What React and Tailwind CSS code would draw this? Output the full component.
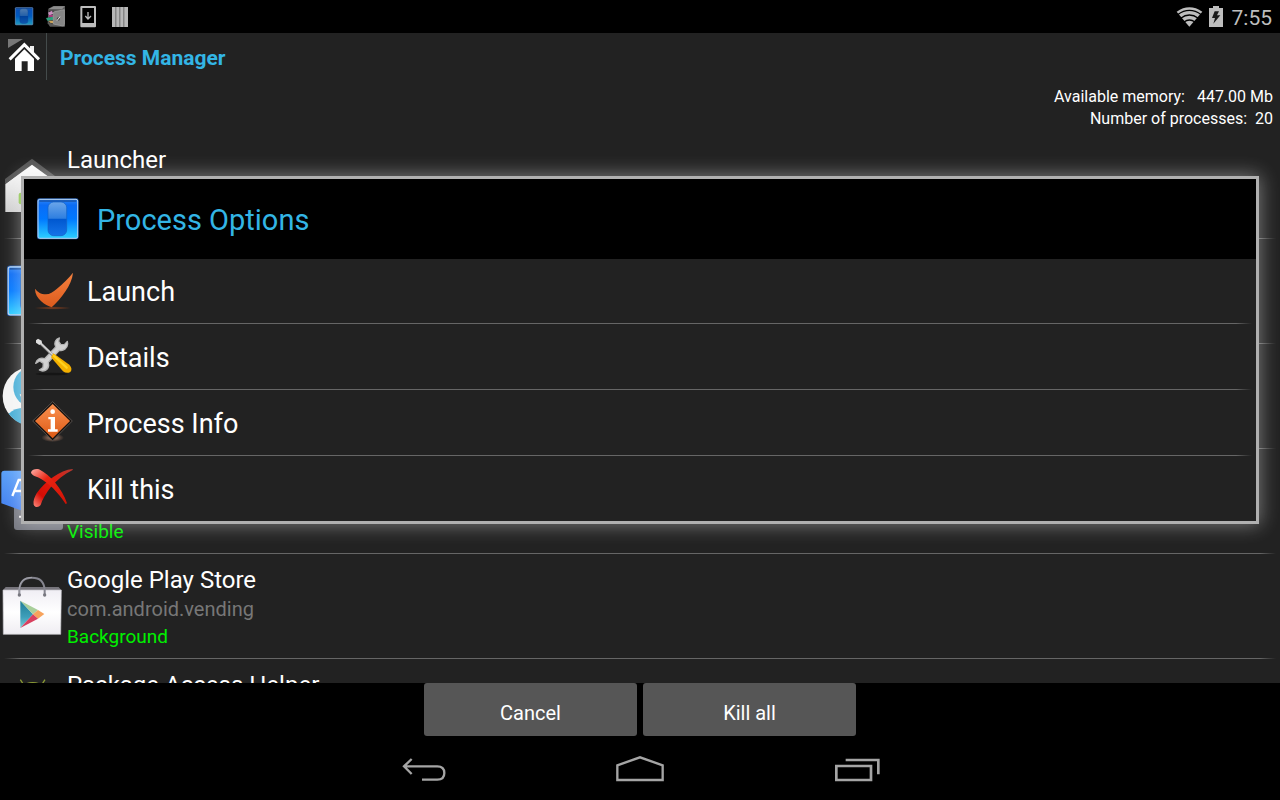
import React from 'react';

const BlueSwitchIcon = ({ id, className, viewBox = '0 0 126 126' }) => (
    <svg className={className} viewBox={viewBox} aria-hidden="true">
        <defs>
            <linearGradient id={`${id}-bg`} x1="0" y1="0" x2="0" y2="1">
                <stop offset="0" stopColor="#2f86f5" />
                <stop offset="0.15" stopColor="#0a6cf5" />
                <stop offset="0.5" stopColor="#0078ff" />
                <stop offset="1" stopColor="#2ccfff" />
            </linearGradient>
            <linearGradient id={`${id}-pill`} x1="0" y1="0" x2="0" y2="1">
                <stop offset="0" stopColor="#6ba6ea" />
                <stop offset="0.48" stopColor="#2f7fe0" />
                <stop offset="0.52" stopColor="#0058d0" />
                <stop offset="1" stopColor="#1573e8" />
            </linearGradient>
        </defs>
        <rect x="0" y="1" width="125" height="123" rx="7" fill="#1c4f9c" />
        <rect x="3" y="4" width="119" height="117" rx="5" fill={`url(#${id}-bg)`} stroke="#b9d3ee" strokeWidth="3" />
        <path d="M7 9H118" stroke="#103f86" strokeWidth="3" />
        <rect x="33" y="12" width="56" height="101" rx="17" fill={`url(#${id}-pill)`} stroke="#1360c4" strokeWidth="2" />
    </svg>
);

const LauncherIcon = () => (
    <svg className="size-16" viewBox="0 42 192 192" aria-hidden="true">
        <defs>
            <linearGradient id="house" x1="0" y1="0" x2="0" y2="1">
                <stop offset="0" stopColor="#ffffff" />
                <stop offset="1" stopColor="#cfcfcf" />
            </linearGradient>
        </defs>
        <path d="M16 132L96 70L176 132V216H16Z" fill="url(#house)" />
        <path d="M15 133V117L96 56L177 117V133L96 74Z" fill="#555" />
        <rect x="56" y="158" width="14" height="35" rx="6" fill="#8bc34a" />
    </svg>
);

const PeopleIcon = () => (
    <svg className="size-16" viewBox="0 -63 192 192" aria-hidden="true">
        <circle cx="96" cy="33" r="88" fill="#f4f4f4" />
        <ellipse cx="98" cy="6" rx="58" ry="60" fill="#45add6" />
        <path d="M26 86Q44 68 72 68V119Q44 110 26 86Z" fill="#45add6" />
        <path d="M59 26L72 34V42Q60 36 59 26Z" fill="#eee" />
    </svg>
);

const KeyboardIcon = () => (
    <svg className="size-16" viewBox="0 252 192 192" aria-hidden="true">
        <defs>
            <linearGradient id="kb" x1="0" y1="0" x2="0" y2="1">
                <stop offset="0" stopColor="#5aa0f8" />
                <stop offset="1" stopColor="#3d78ee" />
            </linearGradient>
        </defs>
        <rect x="42" y="330" width="147" height="105" rx="9" fill="#74767f" />
        <path d="M57 392H66V398H57ZM75 410H152V417H75Z" fill="#eee" />
        <path d="M13 257H130V400L4 355V266Q4 257 13 257Z" fill="url(#kb)" />
        <path d="M37 333L56 285H66V333M43 318H66" fill="none" stroke="#fff" strokeWidth="7" />
    </svg>
);

const PlayStoreIcon = () => (
    <svg className="size-16" viewBox="0 102 192 192" aria-hidden="true">
        <defs>
            <linearGradient id="bag" x1="0" y1="0" x2="0" y2="1">
                <stop offset="0" stopColor="#f0eef4" />
                <stop offset="0.5" stopColor="#ffffff" />
                <stop offset="1" stopColor="#efedf2" />
            </linearGradient>
            <linearGradient id="play" x1="0" y1="0" x2="0" y2="1">
                <stop offset="0" stopColor="#1f7d96" />
                <stop offset="0.6" stopColor="#3e9fba" />
                <stop offset="1" stopColor="#7ccdd6" />
            </linearGradient>
        </defs>
        <path d="M17 141H176L184 151H9Z" fill="#77757c" />
        <path d="M9 150H184L182 283H10Z" fill="url(#bag)" stroke="#c4c2c8" strokeWidth="2" />
        <path d="M58 165V150Q60 113 96 113Q132 113 134 150V165" fill="none" stroke="#85858f" strokeWidth="6" />
        <path d="M57 164V148Q60 112 96 112" fill="none" stroke="#b5b5bd" strokeWidth="2" />
        <circle cx="58" cy="165" r="5" fill="#77777f" />
        <circle cx="134" cy="165" r="5" fill="#77777f" />
        <path d="M61 182V264L99 223Z" fill="url(#play)" />
        <path d="M61 182L114 210L99 223Z" fill="#a9cf9b" />
        <path d="M114 210L133 222L114 236L99 223Z" fill="#f7a35c" />
        <path d="M61 264L99 223L114 236Z" fill="#d8405f" />
    </svg>
);

const AndroidIcon = () => (
    <svg className="size-16" viewBox="0 417 192 192" aria-hidden="true">
        <path d="M61 419L72 436M135 419L124 436" stroke="#8a9a34" strokeWidth="4" />
        <path d="M58 470Q58 426 98 426Q138 426 138 470Z" fill="#8a9a34" />
    </svg>
);

const CheckIcon = () => (
    <svg className="size-12" viewBox="87 36 144 144" aria-hidden="true">
        <defs>
            <linearGradient id="check" x1="0" y1="0" x2="0" y2="1">
                <stop offset="0" stopColor="#f58240" />
                <stop offset="1" stopColor="#dc5a1c" />
            </linearGradient>
            <radialGradient id="check-glow">
                <stop offset="0" stopColor="#8a3f1c" />
                <stop offset="1" stopColor="#8a3f1c" stopOpacity="0" />
            </radialGradient>
        </defs>
        <ellipse cx="158" cy="159" rx="56" ry="5" fill="url(#check-glow)" />
        <path d="M105 101C112 110 122 118 138 118C149 118 160 111 170 102C190 85 205 70 219 53C216 90 182 132 155 157C136 150 105 132 105 101Z" fill="url(#check)" />
    </svg>
);

const ToolsIcon = () => (
    <svg className="size-12" viewBox="87 234 144 144" aria-hidden="true">
        <ellipse cx="155" cy="357" rx="48" ry="4" fill="#151515" />
        <path
            d="M178 249C166 252 161 265 167 276L134 311C122 307 110 312 107 325L119 318L130 325L129 338L118 345C130 352 145 345 146 331L145 322L178 286C190 289 202 281 203 267L202 259L193 269L182 268L176 259Z"
            fill="#d2d2d2"
            stroke="#b5b5b5"
            strokeWidth="4"
            strokeLinejoin="round"
        />
        <path d="M118 262L160 302" stroke="#8e8e8e" strokeWidth="8" />
        <path d="M118 261L160 301" stroke="#d9d9d9" strokeWidth="4" />
        <path d="M108 256L114 251L125 257L126 265L118 270L108 263Z" fill="#dedede" />
        <path d="M160 295L208 329Q219 342 211 351Q200 357 189 349L153 307Z" fill="#f4b000" />
        <path d="M162 303L200 338" stroke="#ffd21f" strokeWidth="7" strokeLinecap="round" />
    </svg>
);

const InfoIcon = () => (
    <svg className="size-12" viewBox="87 42 144 144" aria-hidden="true">
        <defs>
            <linearGradient id="info" x1="0" y1="0" x2="0" y2="1">
                <stop offset="0" stopColor="#fb9150" />
                <stop offset="1" stopColor="#dc5a16" />
            </linearGradient>
            <radialGradient id="info-glow">
                <stop offset="0.3" stopColor="#8a6654" />
                <stop offset="1" stopColor="#8a6654" stopOpacity="0" />
            </radialGradient>
        </defs>
        <ellipse cx="158" cy="158" rx="34" ry="13" fill="url(#info-glow)" />
        <path d="M158 50L217 108L158 167L98 108Z" fill="#17120f" stroke="#55504d" strokeWidth="3" strokeLinejoin="round" />
        <path d="M158 57L210 108L158 160L105 108Z" fill="url(#info)" />
        <circle cx="158" cy="80" r="7" fill="#fff" />
        <path d="M145 96H165V133H173V140H144V133H152V103H145Z" fill="#fff" />
    </svg>
);

const KillIcon = () => (
    <svg className="size-12" viewBox="87 240 144 144" aria-hidden="true">
        <defs>
            <linearGradient id="killA" x1="0" y1="0" x2="1" y2="1">
                <stop offset="0" stopColor="#ffb0a8" />
                <stop offset="0.35" stopColor="#ea2412" />
                <stop offset="1" stopColor="#d01205" />
            </linearGradient>
            <linearGradient id="killB" x1="1" y1="0" x2="0" y2="1">
                <stop offset="0" stopColor="#b33a32" />
                <stop offset="0.4" stopColor="#e51a0c" />
                <stop offset="0.75" stopColor="#d40d05" />
                <stop offset="1" stopColor="#ff8a7c" />
            </linearGradient>
        </defs>
        <path d="M218 252C180 255 136 288 110 325C103 337 99 348 101 359C105 368 116 368 122 360C132 328 165 280 218 255Z" fill="url(#killB)" />
        <path d="M93 262C96 253 108 251 117 253C150 270 186 310 201 355L197 357C175 322 145 293 118 279C106 274 95 272 93 262Z" fill="url(#killA)" />
    </svg>
);

const SafeIcon = () => (
    <svg className="size-6" viewBox="132 15 72 72" aria-hidden="true">
        <path d="M145 26L160 18H195V72L188 80H150L143 70Z" fill="#5a5a5a" />
        <path d="M146 27L162 19H194L186 28Z" fill="#8c8c8c" />
        <path d="M147 32H163V72L147 68Z" fill="#2c2c2c" />
        <path d="M144 38L156 32L160 42L148 46Z" fill="#c98fc0" />
        <path d="M146 45H160V52H146Z" fill="#a53a7c" />
        <path d="M138 54L160 50V60L142 62Z" fill="#2aa07c" />
        <path d="M146 62H160V70L150 68Z" fill="#cda45c" />
        <path d="M160 36L193 29V79L160 72Z" fill="#868686" stroke="#a8a8a8" strokeWidth="2" />
        <circle cx="175" cy="57" r="5" fill="#4a4a4a" />
        <path d="M171 62L180 50" stroke="#ddd" strokeWidth="3" />
    </svg>
);

const DownloadIcon = () => (
    <svg className="size-6" viewBox="228 15 72 72" aria-hidden="true">
        <path fillRule="evenodd" d="M244 18H285Q288 18 288 21V79Q288 82 285 82H244Q241 82 241 79V21Q241 18 244 18ZM247 24V69H282V24Z" fill="#bdbdbd" />
        <path d="M264 36V54M256 48L264 57L273 48" fill="none" stroke="#bdbdbd" strokeWidth="4" />
    </svg>
);

const BarsIcon = () => (
    <svg className="size-6" viewBox="324 15 72 72" aria-hidden="true">
        <path d="M336 21H384V81H336Z" fill="#6e6e6e" />
        <path d="M336 21H346V81H336ZM349 21H358V81H349ZM361 21H370V81H361ZM373 21H384V81H373Z" fill="#b8b8b8" />
    </svg>
);

const WifiIcon = () => (
    <svg className="h-6 w-7" viewBox="408 12 84 72" aria-hidden="true">
        <path d="M410 32Q448 6 487 32L448 77Z" fill="#bebebe" />
        <path d="M413 41Q448 15 484 41M422 52Q448 32 475 52M432 63Q448 51 465 63" fill="none" stroke="#000" strokeWidth="4" />
    </svg>
);

const BatteryIcon = () => (
    <svg className="h-6 w-4" viewBox="504 12 48 72" aria-hidden="true">
        <path d="M519 15H537V21H549V78H507V21H519Z" fill="#bebebe" />
        <path d="M524 31H537L531 43H541L520 68L525 51H516Z" fill="#1a1a1a" />
    </svg>
);

const processes = [
    { icon: <LauncherIcon />, name: 'Launcher' },
    { icon: <BlueSwitchIcon id="proc" className="size-16" viewBox="-17 -15 156 156" /> },
    { icon: <PeopleIcon /> },
    { icon: <KeyboardIcon />, status: 'Visible' },
    { icon: <PlayStoreIcon />, name: 'Google Play Store', pkg: 'com.android.vending', status: 'Background' },
    { icon: <AndroidIcon />, name: 'Package Access Helper' },
];

const options = [
    { icon: <CheckIcon />, label: 'Launch' },
    { icon: <ToolsIcon />, label: 'Details' },
    { icon: <InfoIcon />, label: 'Process Info' },
    { icon: <KillIcon />, label: 'Kill this' },
];

const Divider = () => (
    <div className="mx-1 flex h-px">
        <div className="w-4 bg-linear-to-r from-transparent to-[#666]"></div>
        <div className="flex-1 bg-[#666]"></div>
        <div className="w-4 bg-linear-to-l from-transparent to-[#666]"></div>
    </div>
);

const StatusBar = () => (
    <div className="flex h-[33px] shrink-0 items-center justify-between bg-black pl-3 pr-2">
        <div className="flex gap-2">
            <BlueSwitchIcon id="status" className="size-6 opacity-75" viewBox="-20 -14 164 164" />
            <SafeIcon />
            <DownloadIcon />
            <BarsIcon />
        </div>
        <div className="flex items-center">
            <WifiIcon />
            <span className="ml-1 flex"><BatteryIcon /></span>
            <span className="ml-2 pt-[2px] text-[21px] leading-6 text-[#bebebe]">7:55</span>
        </div>
    </div>
);

const ProcessRow = ({ icon, name, pkg, status }) => (
    <li>
        <div className="flex h-[104px] items-center gap-[3px]">
            {icon}
            <div className="pt-1">
                <p className="h-[30px] text-2xl leading-[30px] text-white">{name}</p>
                <p className="h-7 text-xl leading-7 text-[#777]">{pkg}</p>
                <p className="h-7 text-[19px] leading-7 text-[#00f000]">{status}</p>
            </div>
        </div>
        <Divider />
    </li>
);

const OptionsDialog = () => (
    <div className="absolute inset-x-0 top-[143px] px-[21px]">
        <div role="dialog" aria-labelledby="dialog-title" className="border-[3px] border-[#b0b0b0] bg-[#222] shadow-[0_0_18px_1px_rgba(255,255,255,0.4)]">
            <div className="flex h-20 items-center gap-[18px] bg-black pl-[13px]">
                <BlueSwitchIcon id="dialog" className="size-[42px]" />
                <h2 id="dialog-title" className="pt-[2px] text-[29px] leading-9 text-[#33b5e5]">Process Options</h2>
            </div>
            <ul>
                {options.map((option, i) => (
                    <li key={option.label}>
                        <button type="button" className="flex h-16 w-full items-center gap-[10px] pl-[5px] text-left text-[27px] leading-8 text-white">
                            {option.icon}
                            <span className="pt-[2px]">{option.label}</span>
                        </button>
                        {i < options.length - 1 && <div className="pb-px"><Divider /></div>}
                    </li>
                ))}
            </ul>
        </div>
    </div>
);

const NavBar = () => (
    <nav className="flex h-16 justify-center">
        <button type="button" aria-label="Back" className="flex w-[216px] items-center justify-center pt-1">
            <svg className="h-8 w-12" viewBox="30 237 144 96" fill="none" stroke="#a5a5a5" strokeWidth="7">
                <path d="M41 274H142Q163 274 163 294Q163 314 142 314H96M65 252L42 274L65 297" />
            </svg>
        </button>
        <button type="button" aria-label="Home" className="flex w-[216px] items-center justify-center pt-1">
            <svg className="h-8 w-12" viewBox="678 237 144 96" fill="none" stroke="#a5a5a5" strokeWidth="7">
                <path d="M682 315V271L750 247L818 271V315Z" />
            </svg>
        </button>
        <button type="button" aria-label="Recent apps" className="flex w-[216px] items-center justify-center pt-1">
            <svg className="h-8 w-12" viewBox="1326 237 144 96" fill="none" stroke="#a5a5a5" strokeWidth="8">
                <path d="M1339 273H1443V315H1339ZM1367 255H1465V298" />
            </svg>
        </button>
    </nav>
);

const App = () => {
    return (
        <div className="flex h-screen flex-col overflow-hidden bg-black font-[Roboto,sans-serif]">
            <StatusBar />

            <main className="relative flex min-h-0 flex-1 flex-col overflow-hidden bg-[#222]">
                <header className="flex h-[47px] shrink-0 items-stretch">
                    <button type="button" aria-label="Home" className="flex w-[47px] items-center border-r border-[#444b4b] pl-[7px]">
                        <svg className="h-9 w-[34px]" viewBox="21 117 102 108" aria-hidden="true">
                            <path d="M24 114H74L24 144Z" fill="#777" />
                            <path d="M90 138H102V158L90 148Z" fill="#eee" />
                            <path d="M29 178L73 134L117 178" fill="none" stroke="#fff" strokeWidth="9" />
                            <path d="M45 176L73 148L102 176V213H83V184H65V213H45Z" fill="#fff" />
                        </svg>
                    </button>
                    <h1 className="pl-[13px] pt-[10px] text-[21px] font-bold leading-[30px] text-[#33b5e5]">Process Manager</h1>
                </header>

                <div className="h-[54px] shrink-0 pr-[7px] pt-[6px] text-right text-base leading-[22px] text-white">
                    <p>Available memory: <span className="pl-2">447.00 Mb</span></p>
                    <p>Number of processes: <span className="pl-1">20</span></p>
                </div>

                <ul className="min-h-0 flex-1 overflow-hidden">
                    {processes.map((process, i) => (
                        <ProcessRow key={i} {...process} />
                    ))}
                </ul>

                <OptionsDialog />
            </main>

            <footer className="shrink-0 bg-black">
                <div className="flex justify-center gap-[6px] text-xl leading-6 text-white">
                    <button type="button" className="h-[53px] w-[213px] rounded-[3px] bg-[#565656] pt-[6px]">Cancel</button>
                    <button type="button" className="h-[53px] w-[213px] rounded-[3px] bg-[#565656] pt-[6px]">Kill all</button>
                </div>
                <NavBar />
            </footer>
        </div>
    );
};

export default App;
